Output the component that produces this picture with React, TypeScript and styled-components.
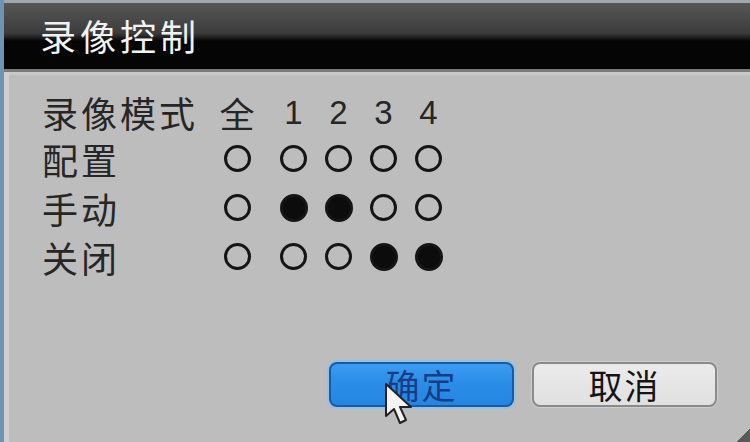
import React from 'react';
import styled, { createGlobalStyle } from 'styled-components';

const GlobalStyle = createGlobalStyle`
  html, body {
    margin: 0;
    padding: 0;
    width: 750px;
    height: 442px;
    overflow: hidden;
    background: #bdbdbd;
  }
`;

const CJK = `"Noto Sans CJK SC", "Noto Sans", sans-serif`;

const Window = styled.div`
  position: relative;
  width: 750px;
  height: 442px;
  display: flex;
  flex-direction: column;
  box-sizing: border-box;
  border-left: 4px solid #7193b3;
  background: #bdbdbd;
  overflow: hidden;
`;

const TitleBar = styled.div`
  height: 72px;
  flex-shrink: 0;
  display: flex;
  align-items: center;
  padding-left: 36px;
  padding-bottom: 2px;
  box-sizing: border-box;
  border-top: 3px solid #9ea6ae;
  border-bottom: 3px solid #7a7a7a;
  background: linear-gradient(
    to bottom,
    #575757 0px,
    #3c3c3c 30px,
    #222 34px,
    #050505 38px,
    #050505 100%
  );
`;

const Title = styled.h1`
  margin: 0;
  color: #f2f2f2;
  font-family: ${CJK};
  font-weight: 400;
  font-size: 36px;
  letter-spacing: 4px;
  line-height: 1;
`;

const Body = styled.div`
  flex: 1;
  display: flex;
  flex-direction: column;
  padding: 18px 33px 35px 38px;
  box-shadow: inset 5px 0 0 #cfcfcf, inset 0 3px 0 #c9c9c9;
`;

const ModeGrid = styled.div`
  display: grid;
  grid-template-columns: 173px 56px repeat(4, 45px);
  grid-template-rows: 44px repeat(3, 49px);
  align-items: center;
`;

const Label = styled.div`
  font-family: ${CJK};
  font-size: 36px;
  color: #262626;
  line-height: 1;
  letter-spacing: 3px;
`;

const Cell = styled.div<{ $first?: boolean }>`
  display: flex;
  justify-content: ${(p) => (p.$first ? 'flex-start' : 'center')};
  align-items: center;
  height: 100%;
`;

const CellInner = styled.div`
  width: 44px;
  display: flex;
  justify-content: center;
  align-items: center;
`;

const Head = styled.span<{ $cjk?: boolean }>`
  font-family: ${(p) => (p.$cjk ? CJK : `"Liberation Sans", Arial, sans-serif`)};
  font-size: ${(p) => (p.$cjk ? '35px' : '33px')};
  color: #262626;
  line-height: 1;
`;

const Dot = styled.span<{ $on?: boolean }>`
  display: block;
  box-sizing: border-box;
  width: ${(p) => (p.$on ? '28px' : '27px')};
  height: ${(p) => (p.$on ? '28px' : '27px')};
  border-radius: 50%;
  border: 3px solid #151515;
  background: ${(p) => (p.$on ? '#0c0c0c' : 'transparent')};
`;

const Spacer = styled.div`
  flex: 1;
`;

const ButtonRow = styled.div`
  display: flex;
  justify-content: flex-end;
  gap: 18px;
`;

const Button = styled.button<{ $primary?: boolean }>`
  width: 185px;
  height: 45px;
  box-sizing: border-box;
  border-radius: 8px;
  font-family: ${CJK};
  font-size: 34px;
  line-height: 1;
  padding: 0;
  cursor: pointer;
  letter-spacing: 2px;
  display: flex;
  align-items: center;
  justify-content: center;
  border: 2px solid ${(p) => (p.$primary ? '#1b5b9d' : '#8a8a8a')};
  color: ${(p) => (p.$primary ? '#173d86' : '#141414')};
  background: ${(p) =>
    p.$primary
      ? 'linear-gradient(to bottom, #3d9cf0 0%, #2a8de8 45%, #2486e2 100%)'
      : 'linear-gradient(to bottom, #ebebeb 0%, #e0e0e0 100%)'};
  box-shadow: ${(p) =>
    p.$primary ? '0 0 0 2px #92c1ea' : '0 0 0 1px #cfcfcf'};
`;

const Pointer = styled.svg`
  position: absolute;
  left: 379px;
  top: 382px;
  width: 34px;
  height: 46px;
  pointer-events: none;
`;

const Corner = styled.div`
  position: absolute;
  right: 0;
  bottom: 0;
  width: 14px;
  height: 14px;
  background: linear-gradient(135deg, transparent 50%, #5a5a5a 50%);
`;

const heads = ['全', '1', '2', '3', '4'];
const rows: { label: string; states: boolean[] }[] = [
  { label: '配置', states: [false, false, false, false, false] },
  { label: '手动', states: [false, true, true, false, false] },
  { label: '关闭', states: [false, false, false, true, true] },
];

export default function App() {
  return (
    <>
      <GlobalStyle />
      <Window>
        <TitleBar>
          <Title>录像控制</Title>
        </TitleBar>
        <Body>
          <ModeGrid>
            <Label>录像模式</Label>
            {heads.map((h, i) => (
              <Cell key={h} $first={i === 0}>
                <CellInner>
                  <Head $cjk={i === 0}>{h}</Head>
                </CellInner>
              </Cell>
            ))}
            {rows.map((r) => (
              <React.Fragment key={r.label}>
                <Label>{r.label}</Label>
                {r.states.map((on, i) => (
                  <Cell key={i} $first={i === 0}>
                    <CellInner>
                      <Dot $on={on} />
                    </CellInner>
                  </Cell>
                ))}
              </React.Fragment>
            ))}
          </ModeGrid>
          <Spacer />
          <ButtonRow>
            <Button $primary>确定</Button>
            <Button>取消</Button>
          </ButtonRow>
        </Body>
        <Pointer viewBox="0 0 34 46">
          <path
            d="M3 2 L3 34 L11 27 L17 41 L23 38 L17 25 L28 25 Z"
            fill="#f4f4f4"
            stroke="#222"
            strokeWidth="2"
            strokeLinejoin="round"
          />
        </Pointer>
        <Corner />
      </Window>
    </>
  );
}
